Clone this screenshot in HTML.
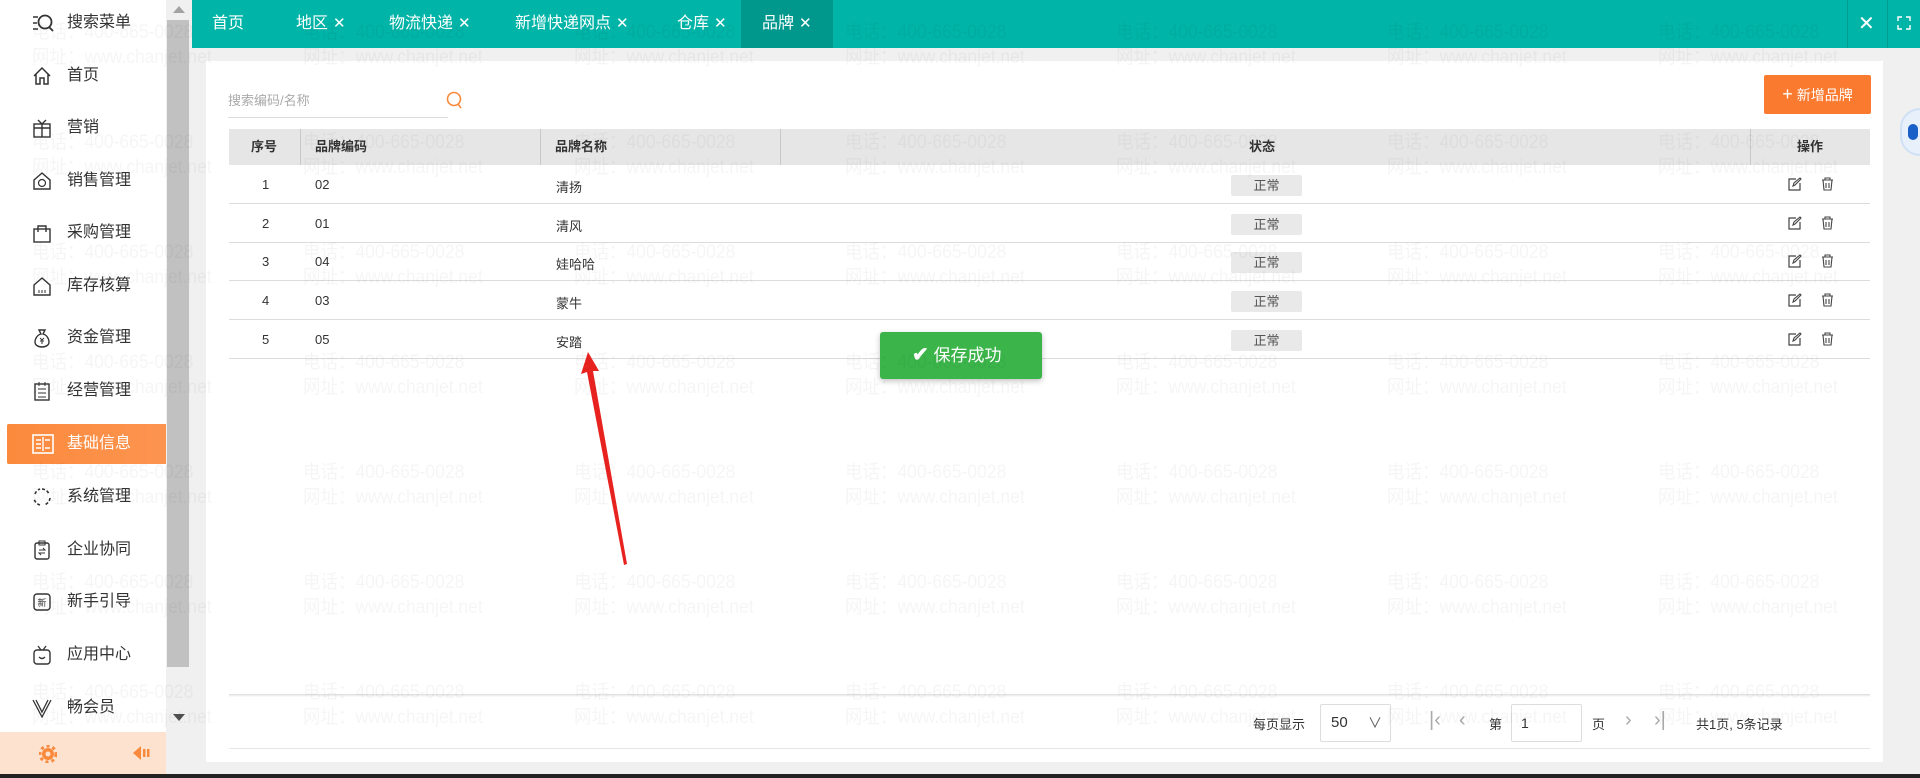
<!DOCTYPE html>
<html><head><meta charset="utf-8"><style>
*{margin:0;padding:0;box-sizing:border-box}
body{width:1920px;height:778px;overflow:hidden;background:#f0f0f0;font-family:"Liberation Sans","Noto Sans CJK SC",sans-serif;position:relative;color:#333}
.abs{position:absolute}
#side{left:0;top:0;width:166px;height:778px;background:#fff}
.mi{position:absolute;left:0;width:166px;height:40px;font-size:16px;color:#333;line-height:40px;padding-left:67px}
.mi svg{position:absolute;left:32px;top:10px}
.mi.act{left:7px;width:160px;background:linear-gradient(90deg,#fb8a3c,#fc9450);color:#fff;padding-left:60px;border-radius:2px}
.mi.act svg{left:25px}
#sb{left:166px;top:0;width:25px;height:778px;background:#f0f0f0}
#tabs{left:192px;top:0;width:1728px;height:48px;background:#00b4a7;color:#fff;font-size:16px}
.tab{position:absolute;top:0;height:48px;line-height:48px}
.tab .x{font-size:15px;margin-left:5px}
#card{left:206px;top:61px;width:1677px;height:701px;background:#fff}
.th{position:absolute;top:129px;height:36px;line-height:36px;font-size:13px;font-weight:bold;color:#333}
.td{position:absolute;font-size:13px;color:#333}
.badge{position:absolute;left:1231px;width:71px;height:21px;background:#e9e9e9;border-radius:2px;font-size:13px;color:#555;text-align:center;line-height:21px}
.wm{position:absolute;font-size:19px;color:rgba(0,0,0,0.04);white-space:nowrap;line-height:25px;pointer-events:none;z-index:50;transform:scaleX(0.92);transform-origin:left top}
</style></head><body>
<div id="side" class="abs">
 <div class="mi" style="top:3px"><svg width="22" height="20" viewBox="0 0 22 20"><path d="M1 4h5M1 10h4M1 16h5" stroke="#333" stroke-width="1.6"/><circle cx="13" cy="9" r="6.5" fill="none" stroke="#333" stroke-width="1.8"/><path d="M17 14l4 4" stroke="#333" stroke-width="1.8"/></svg>搜索菜单</div>
 <div class="mi" style="top:56px"><svg width="20" height="20" viewBox="0 0 20 20"><path d="M2 10L10 2l8 8M4 8v10h4v-6h4v6h4V8" fill="none" stroke="#333" stroke-width="1.5"/></svg>首页</div>
 <div class="mi" style="top:108px"><svg width="20" height="20" viewBox="0 0 20 20"><rect x="2" y="6" width="16" height="13" fill="none" stroke="#333" stroke-width="1.4"/><path d="M2 10h16M10 6v13M6 2l4 4 4-4" fill="none" stroke="#333" stroke-width="1.4"/></svg>营销</div>
 <div class="mi" style="top:161px"><svg width="20" height="20" viewBox="0 0 20 20"><path d="M2 9L10 2l8 7v9H2z" fill="none" stroke="#333" stroke-width="1.4"/><circle cx="10" cy="12" r="3.5" fill="none" stroke="#333" stroke-width="1.2"/></svg>销售管理</div>
 <div class="mi" style="top:213px"><svg width="20" height="20" viewBox="0 0 20 20"><rect x="2" y="6" width="16" height="13" fill="none" stroke="#333" stroke-width="1.4"/><path d="M6 9V3h8v6" fill="none" stroke="#333" stroke-width="1.4"/></svg>采购管理</div>
 <div class="mi" style="top:266px"><svg width="20" height="20" viewBox="0 0 20 20"><path d="M2 9L10 2l8 7v10H2z" fill="none" stroke="#333" stroke-width="1.4"/><path d="M7 14v3M10 14v3M13 14v3" stroke="#333"/></svg>库存核算</div>
 <div class="mi" style="top:318px"><svg width="20" height="20" viewBox="0 0 20 20"><path d="M7 2h6l-2 4c4 1 6 5 6 8 0 3-3 5-7 5s-7-2-7-5c0-3 2-7 6-8z" fill="none" stroke="#333" stroke-width="1.4"/><path d="M8 10l2 2 2-2M10 12v4M8 13h4" stroke="#333" fill="none"/></svg>资金管理</div>
 <div class="mi" style="top:371px"><svg width="20" height="20" viewBox="0 0 20 20"><rect x="3" y="3" width="14" height="16" fill="none" stroke="#333" stroke-width="1.4"/><path d="M6 8h8M6 12h8M6 16h8M7 1v4M13 1v4" stroke="#333"/></svg>经营管理</div>
 <div class="mi act" style="top:424px"><svg width="22" height="20" viewBox="0 0 22 20"><rect x="1" y="1" width="20" height="18" fill="none" stroke="#fff" stroke-width="1.6"/><path d="M4 6h5M4 10h5M4 14h5M11 3v14M13 6h5M13 14h5" stroke="#fff" stroke-width="1.4"/></svg>基础信息</div>
 <div class="mi" style="top:477px"><svg width="20" height="20" viewBox="0 0 20 20"><path d="M10 2a8 8 0 0 1 7 5M18 11a8 8 0 0 1-6 7M8 18a8 8 0 0 1-6-7M3 7a8 8 0 0 1 5-5" fill="none" stroke="#333" stroke-width="1.6" stroke-dasharray="3 2"/></svg>系统管理</div>
 <div class="mi" style="top:530px"><svg width="20" height="20" viewBox="0 0 20 20"><rect x="3" y="3" width="14" height="16" rx="2" fill="none" stroke="#333" stroke-width="1.4"/><path d="M7 1h6v4H7zM7 10h6l-2-2M13 13H7l2 2" fill="none" stroke="#333"/></svg>企业协同</div>
 <div class="mi" style="top:582px"><svg width="20" height="20" viewBox="0 0 20 20"><rect x="2" y="2" width="16" height="16" rx="3" fill="none" stroke="#333" stroke-width="1.4"/><text x="10" y="14" font-size="9" text-anchor="middle" fill="#333">新</text></svg>新手引导</div>
 <div class="mi" style="top:635px"><svg width="20" height="20" viewBox="0 0 20 20"><rect x="2" y="5" width="16" height="14" rx="3" fill="none" stroke="#333" stroke-width="1.4"/><path d="M6 1l3 4M14 1l-3 4M7 12q3 3 6 0" fill="none" stroke="#333" stroke-width="1.3"/></svg>应用中心</div>
 <div class="mi" style="top:688px"><svg width="20" height="20" viewBox="0 0 20 20"><path d="M1 2l9 17 9-17M4 2l6 12 6-12" fill="none" stroke="#333" stroke-width="1.3"/></svg>畅会员</div>
 <div class="abs" style="left:0;top:732px;width:190px;height:42px;background:#fde2d0"></div>
 <svg class="abs" style="left:39px;top:745px" width="18" height="18" viewBox="0 0 18 18"><circle cx="9" cy="9" r="6" fill="#f98a3c"/><circle cx="9" cy="9" r="8" fill="none" stroke="#f98a3c" stroke-width="3" stroke-dasharray="3 3"/><circle cx="9" cy="9" r="2.5" fill="#fde2d0"/></svg>
 <svg class="abs" style="left:132px;top:744px" width="22" height="18" viewBox="0 0 22 18"><path d="M1 9L9 2v14z" fill="#f98a3c"/><rect x="11" y="5" width="2.5" height="8" fill="#f98a3c"/><rect x="15" y="5" width="2.5" height="8" fill="#f98a3c"/></svg>
</div>
<div id="sb" class="abs"><div class="abs" style="left:7px;top:6px;border:6px solid transparent;border-bottom:7px solid #a3a3a3;border-top:0"></div><div class="abs" style="left:1px;top:20px;width:22px;height:647px;background:#c1c1c1"></div><div class="abs" style="left:7px;top:714px;border:6px solid transparent;border-top:7px solid #505050;border-bottom:0"></div></div>
<div id="tabs" class="abs">
 <div class="tab" style="left:20px">首页</div>
 <div class="tab" style="left:104px">地区<span class="x">✕</span></div>
 <div class="tab" style="left:197px">物流快递<span class="x">✕</span></div>
 <div class="tab" style="left:323px">新增快递网点<span class="x">✕</span></div>
 <div class="tab" style="left:485px">仓库<span class="x">✕</span></div>
 <div class="tab" style="left:549px;width:92px;background:#00978c;padding-left:21px">品牌<span class="x">✕</span></div>
 <div class="abs" style="left:1655px;top:0;width:1px;height:48px;background:#009e92"></div>
 <div class="abs" style="left:1695px;top:0;width:1px;height:48px;background:#009e92"></div>
 <div class="tab" style="left:1666px;font-size:20px">✕</div>
 <svg class="abs" style="left:1705px;top:16px" width="14" height="14" viewBox="0 0 14 14"><path d="M1 5V1h4M9 1h4v4M13 9v4H9M5 13H1V9" fill="none" stroke="#fff" stroke-width="1.4"/></svg>
</div>
<div id="card" class="abs"></div>
<div class="abs" style="left:228px;top:90px;font-size:13px;color:#aaa">搜索编码/名称</div>
<div class="abs" style="left:228px;top:117px;width:220px;height:1px;background:#ddd"></div>
<svg class="abs" style="left:446px;top:91px" width="18" height="20" viewBox="0 0 18 20"><circle cx="8" cy="8" r="6.5" fill="none" stroke="#f98a3c" stroke-width="1.6"/><path d="M12 13l3 4" stroke="#f98a3c" stroke-width="1.6"/></svg>
<div class="abs" style="left:1764px;top:75px;width:107px;height:39px;background:#fa7a30;border-radius:2px;color:#fff;font-size:14px;line-height:39px;text-align:center"><span style="font-size:18px">+</span> 新增品牌</div>
<div class="abs" style="left:229px;top:129px;width:1641px;height:36px;background:#e6e6e6"></div>
<div class="abs" style="left:300px;top:129px;width:1px;height:36px;background:#c8c8c8"></div>
<div class="abs" style="left:540px;top:129px;width:1px;height:36px;background:#c8c8c8"></div>
<div class="abs" style="left:780px;top:129px;width:1px;height:36px;background:#c8c8c8"></div>
<div class="abs" style="left:1750px;top:129px;width:1px;height:36px;background:#c8c8c8"></div>
<div class="th" style="left:251px">序号</div>
<div class="th" style="left:315px">品牌编码</div>
<div class="th" style="left:555px">品牌名称</div>
<div class="th" style="left:1249px">状态</div>
<div class="th" style="left:1797px">操作</div>
<div id="rows"></div>
<script>
var d=[["1","02","清扬"],["2","01","清风"],["3","04","娃哈哈"],["4","03","蒙牛"],["5","05","安踏"]];
var h="";
for(var i=0;i<5;i++){var t=165+i*38.7;
h+='<div class="td" style="left:262px;top:'+(t+12)+'px">'+d[i][0]+'</div><div class="td" style="left:315px;top:'+(t+12)+'px">'+d[i][1]+'</div><div class="td" style="left:556px;top:'+(t+12)+'px">'+d[i][2]+'</div><div class="badge" style="top:'+(t+10)+'px">正常</div>';
h+='<svg class="abs" style="left:1788px;top:'+(t+12)+'px" width="14" height="14" viewBox="0 0 14 14"><path d="M8 2H1v11h11V6" fill="none" stroke="#444" stroke-width="1.2"/><path d="M5 9l1-3 6-5 1 1-6 6z" fill="none" stroke="#444" stroke-width="1.1"/></svg>';
h+='<svg class="abs" style="left:1821px;top:'+(t+12)+'px" width="13" height="14" viewBox="0 0 13 14"><path d="M1 3h11M4 3V1h5v2M2 3l1 10h7l1-10M5 6v5M8 6v5" fill="none" stroke="#444" stroke-width="1.1"/></svg>';
h+='<div class="abs" style="left:229px;top:'+(t+38)+'px;width:1641px;height:1px;background:#dcdcdc"></div>';}
document.getElementById("rows").innerHTML=h;
</script>
<div class="abs" style="left:229px;top:694px;width:1641px;height:3px;background:linear-gradient(#ddd,#fff)"></div>
<div class="abs" style="left:229px;top:748px;width:1641px;height:1px;background:#e6e6e6"></div>
<div class="abs" style="left:1253px;top:714px;font-size:13px">每页显示</div>
<div class="abs" style="left:1320px;top:704px;width:71px;height:38px;border:1px solid #ddd;border-radius:2px;font-size:15px;line-height:36px;padding-left:10px">50<span style="position:absolute;right:8px;top:0;font-size:14px;color:#555">∨</span></div>
<div class="abs" style="left:1429px;top:709px;font-size:20px;color:#aaa">|‹</div>
<div class="abs" style="left:1459px;top:709px;font-size:20px;color:#aaa">‹</div>
<div class="abs" style="left:1489px;top:714px;font-size:13px">第</div>
<div class="abs" style="left:1511px;top:704px;width:71px;height:38px;border:1px solid #ddd;border-radius:2px;font-size:14px;line-height:36px;padding-left:9px">1</div>
<div class="abs" style="left:1592px;top:714px;font-size:13px">页</div>
<div class="abs" style="left:1625px;top:709px;font-size:20px;color:#aaa">›</div>
<div class="abs" style="left:1654px;top:709px;font-size:20px;color:#aaa">›|</div>
<div class="abs" style="left:1696px;top:714px;font-size:13px">共1页, 5条记录</div>
<div class="abs" style="left:1900px;top:108px;width:40px;height:48px;border-radius:24px;background:#e8f0fb;border:2px solid #cfe0f5"><div style="position:absolute;left:6px;top:14px;width:10px;height:16px;border-radius:5px;background:#1a5fc7"></div></div>
<div class="abs" style="left:0;top:774px;width:1920px;height:4px;background:#222"></div>
<div class="abs" style="left:880px;top:332px;width:162px;height:47px;background:#3bb54a;border-radius:3px;box-shadow:0 2px 6px rgba(0,0,0,.25);color:#fff;font-size:17px;line-height:47px;padding-left:32px"><span style="font-size:20px;font-weight:bold">✔</span> 保存成功</div>
<svg class="abs" style="left:0;top:0;z-index:40" width="1920" height="778"><path d="M588 352l-7 22 6-2 37 193 3-1-34-193 6 0z" fill="#e8231f"/></svg>
<div id="wm"></div>
<script>
var w="";for(var r=0;r<7;r++)for(var c=0;c<7;c++){w+='<div class="wm" style="left:'+(32+c*271)+'px;top:'+(20+r*110)+'px">电话：400-665-0028<br>网址：www.chanjet.net</div>';}
document.getElementById("wm").innerHTML=w;
</script>
</body></html>
